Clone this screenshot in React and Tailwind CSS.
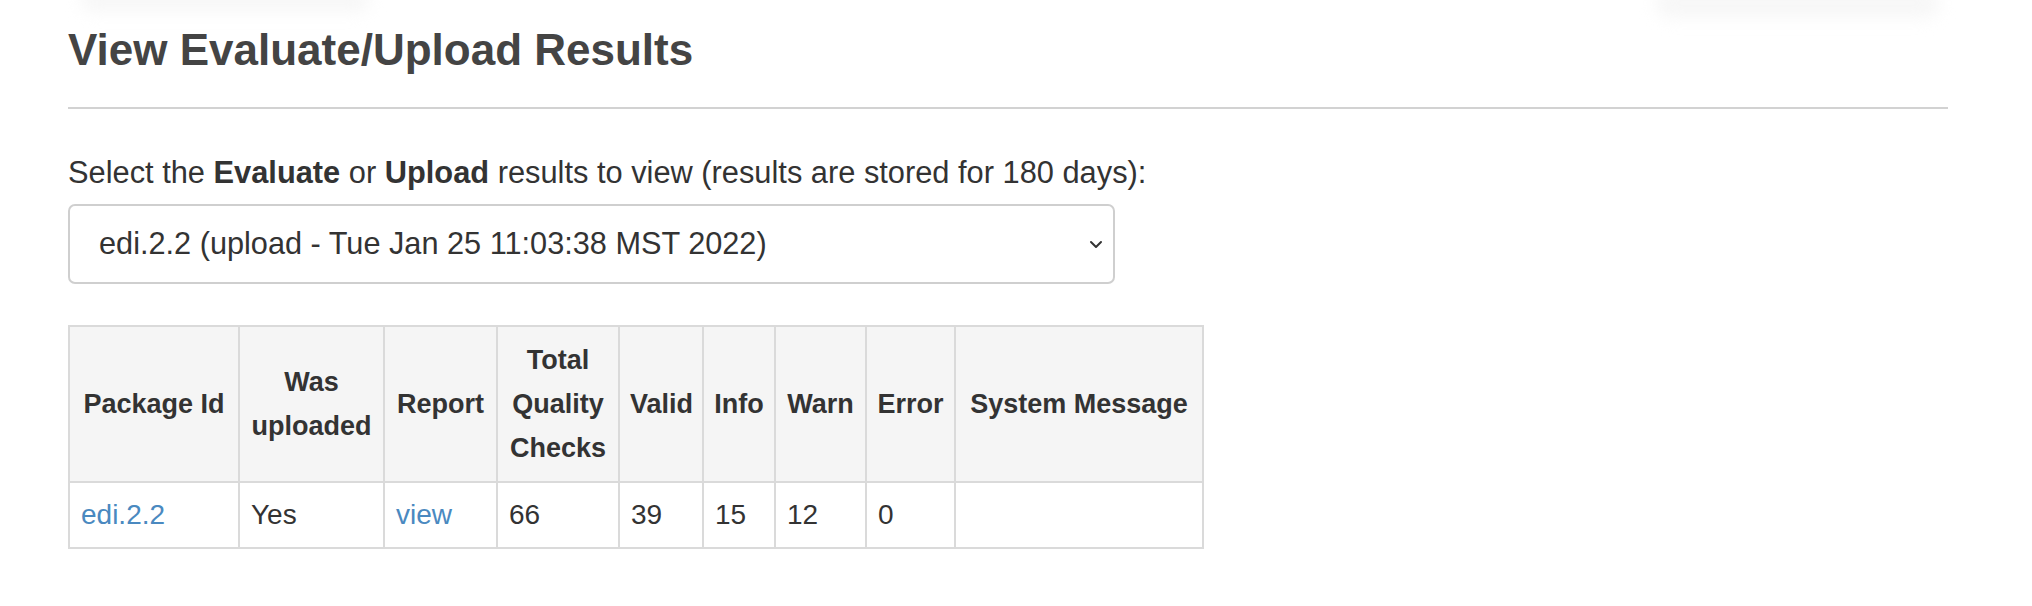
import React from "react";

const cols = [170, 145, 113, 122, 84, 72, 91, 89, 248];

const headers = [
  "Package Id",
  "Was uploaded",
  "Report",
  "Total Quality Checks",
  "Valid",
  "Info",
  "Warn",
  "Error",
  "System Message",
];

const td = "border-2 border-[#dadada] px-[11px] py-[10px] text-[28px]";

export default function App() {
  return (
    <div
      className="relative w-full h-[606px] bg-white overflow-hidden text-[#333]"
      style={{ fontFamily: '"Liberation Sans", Arial, Helvetica, sans-serif' }}
    >
      {/* faint blurred shadows at the top edge */}
      <div className="absolute left-[80px] top-[-12px] w-[290px] h-[24px] bg-[#f7f7f7] blur-[8px] rounded-full" />
      <div className="absolute left-[1655px] top-[-12px] w-[285px] h-[30px] bg-[#f7f7f7] blur-[8px] rounded-full" />

      <div className="relative pl-[68px] pr-[84px] pt-[26px]">
        <h2 className="text-[44px] font-bold leading-[1.1] text-[#444]">
          View Evaluate/Upload Results
        </h2>
        <div className="mt-[33px] h-[2px] bg-[#d2d2d2]" />

        <p className="mt-[42px] text-[30.8px] leading-[43px] text-[#333]">
          Select the <b>Evaluate</b> or <b>Upload</b> results to view (results
          are stored for 180 days):
        </p>

        <div className="mt-[10px] w-[1047px] h-[80px] border-2 border-[#cfcfcf] rounded-[7px] flex items-center justify-between pl-[29px] pr-[10px] text-[30.7px] text-[#333]">
          <span>edi.2.2 (upload - Tue Jan 25 11:03:38 MST 2022)</span>
          <svg width="14" height="9" viewBox="0 0 14 9">
            <path
              d="M2 2 L7 7 L12 2"
              fill="none"
              stroke="#333"
              strokeWidth="2"
              strokeLinecap="round"
              strokeLinejoin="round"
            />
          </svg>
        </div>

        <table className="mt-[41px] table-fixed border-collapse w-[1134px] text-[27px] leading-[44px]">
          <colgroup>
            {cols.map((w, i) => (
              <col key={i} style={{ width: w }} />
            ))}
          </colgroup>
          <thead>
            <tr className="bg-[#f5f5f5]">
              {headers.map((h) => (
                <th
                  key={h}
                  className="border-2 border-[#dadada] px-[10px] py-[11px] font-bold text-center align-middle text-[#333]"
                >
                  {h}
                </th>
              ))}
            </tr>
          </thead>
          <tbody>
            <tr>
              <td className={td}>
                <a className="text-[#4a89c0]">edi.2.2</a>
              </td>
              <td className={td}>Yes</td>
              <td className={td}>
                <a className="text-[#4a89c0]">view</a>
              </td>
              <td className={td}>66</td>
              <td className={td}>39</td>
              <td className={td}>15</td>
              <td className={td}>12</td>
              <td className={td}>0</td>
              <td className={td}></td>
            </tr>
          </tbody>
        </table>
      </div>
    </div>
  );
}
